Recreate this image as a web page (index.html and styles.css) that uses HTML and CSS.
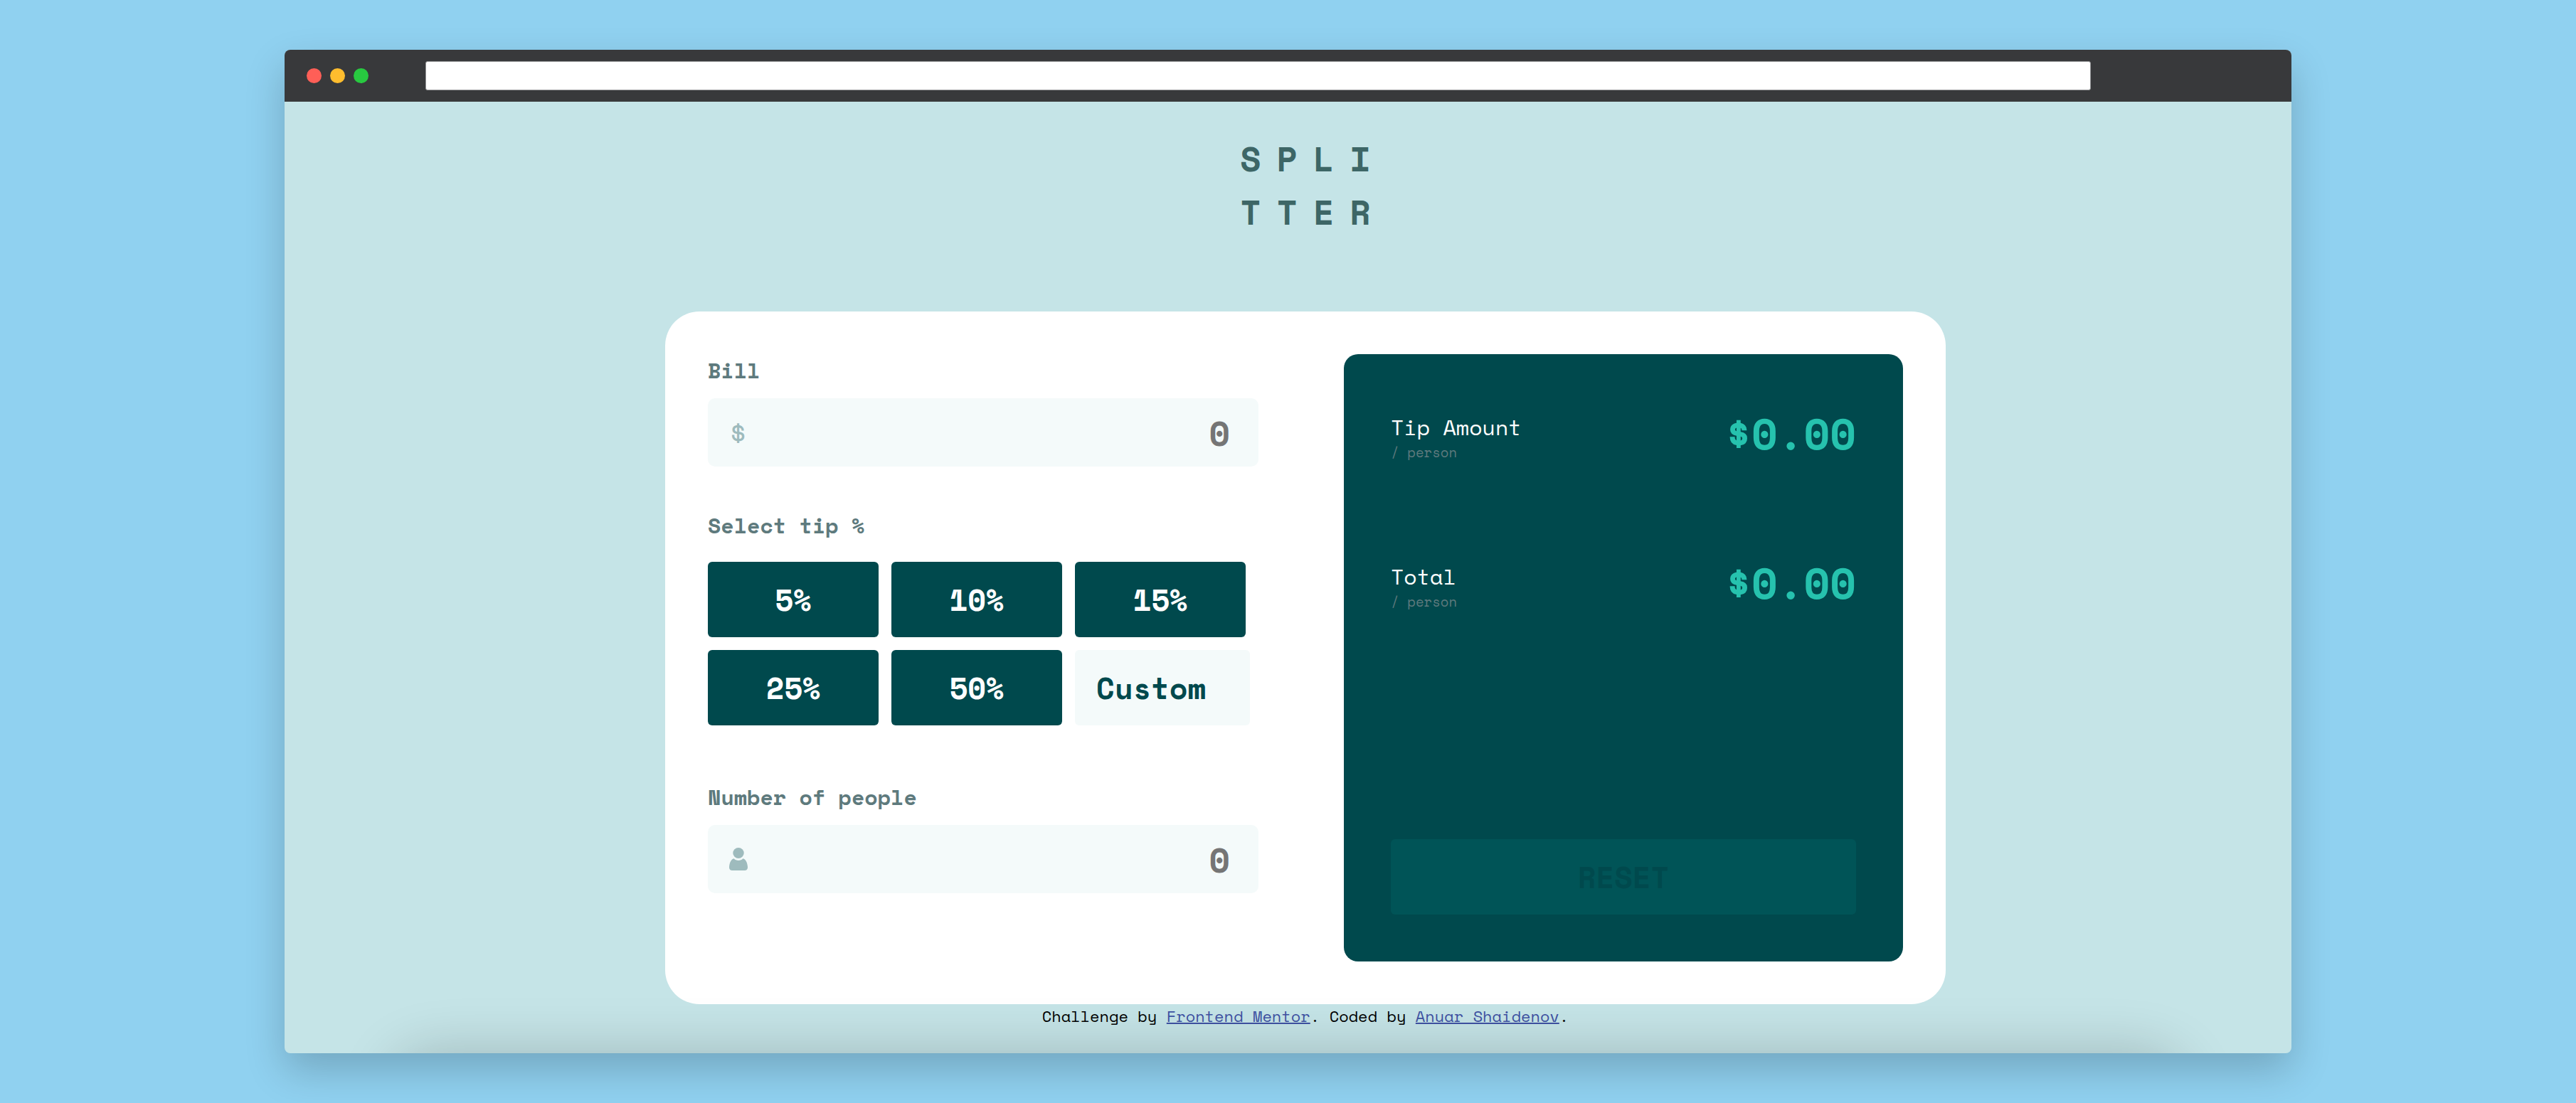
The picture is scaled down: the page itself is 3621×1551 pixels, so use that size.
FILE: index.html
```html
<!DOCTYPE html>
<html lang="en">
<head>
  <meta charset="utf-8">
  <meta name="viewport" content="width=device-width, initial-scale=1">
  <title>Splitter</title>
  <link rel="stylesheet" href="styles.css">
</head>
<body>
  <div class="window">
    <header class="window-bar">
      <div class="dots">
        <span class="dot dot-red"></span>
        <span class="dot dot-yellow"></span>
        <span class="dot dot-green"></span>
      </div>
      <input class="address" type="text" aria-label="Address">
    </header>

    <div class="page">
      <h1 class="logo">SPLI<br>TTER</h1>

      <main class="card">
        <form class="form">
          <label class="label" for="bill">Bill</label>
          <div class="field">
            <span class="field-icon" aria-hidden="true">$</span>
            <input class="field-input" id="bill" type="text" inputmode="decimal" placeholder="0">
          </div>

          <fieldset class="tips">
            <legend class="label">Select tip %</legend>
            <div class="tip-grid">
              <button class="tip" type="button">5%</button>
              <button class="tip" type="button">10%</button>
              <button class="tip" type="button">15%</button>
              <button class="tip" type="button">25%</button>
              <button class="tip" type="button">50%</button>
              <input class="custom" type="text" inputmode="numeric" placeholder="Custom" aria-label="Custom tip">
            </div>
          </fieldset>

          <label class="label" for="people">Number of people</label>
          <div class="field">
            <svg class="field-icon" width="26" height="32" viewBox="0 0 26 32" aria-hidden="true">
              <ellipse cx="13" cy="7.5" rx="7.7" ry="7.5" fill="currentColor"/>
              <path fill="currentColor" d="M6.600 15.200C8.200 17 10.400 18 13 18s4.800-1 6.400-2.800c3.800.9 6.100 5.600 6.600 11.800.2 3.200-1.500 5-4.200 5H4.200C1.500 32-.2 30.200 0 27c.5-6.200 2.800-10.900 6.600-11.800z"/>
            </svg>
            <input class="field-input" id="people" type="text" inputmode="numeric" placeholder="0">
          </div>
        </form>

        <section class="result">
          <div class="row">
            <div class="row-label">
              <p class="row-title">Tip Amount</p>
              <p class="row-note">/ person</p>
            </div>
            <output class="amount">$0.00</output>
          </div>
          <div class="row">
            <div class="row-label">
              <p class="row-title">Total</p>
              <p class="row-note">/ person</p>
            </div>
            <output class="amount">$0.00</output>
          </div>
          <button class="reset" type="reset">RESET</button>
        </section>
      </main>

      <footer class="credits">Challenge by <a href="https://www.frontendmentor.io">Frontend Mentor</a>. Coded by <a href="#">Anuar Shaidenov</a>.</footer>
    </div>
  </div>
</body>
</html>
```
FILE: styles.css
```css
* {
  box-sizing: border-box;
}

body {
  margin: 0;
  padding: 70px 400px;
  background: #90d1f0;
  font-family: "Space Mono", "DejaVu Sans Mono", monospace;
}

p,
h1,
fieldset,
legend {
  margin: 0;
  padding: 0;
  border: 0;
}

button,
input {
  font: inherit;
  border: 0;
  outline: 0;
}

/* Browser window */
.window {
  position: relative;
  overflow: hidden;
  border-radius: 8px;
  background: #c5e4e7;
  box-shadow: 0 24px 56px rgba(0, 0, 0, 0.2);
}

.window::after {
  content: "";
  position: absolute;
  top: 100%;
  left: 150px;
  right: 150px;
  height: 120px;
  border-radius: 60px;
  box-shadow: 0 0 80px rgba(0, 0, 0, 0.2);
  pointer-events: none;
}

.window-bar {
  display: flex;
  align-items: center;
  height: 73px;
  padding-left: 31px;
  background: #38393b;
}

.dots {
  display: flex;
  gap: 12px;
  width: 167px;
}

.dot {
  width: 21px;
  height: 21px;
  border-radius: 50%;
}

.dot-red {
  background: #ff5f57;
}

.dot-yellow {
  background: #ffbd2e;
}

.dot-green {
  background: #28c940;
}

.address {
  flex: 1;
  height: 41px;
  margin-right: 282px;
  padding: 0 12px;
  border: 1px solid #97989a;
  border-radius: 3px;
  background: #fff;
}

/* Page */
.page {
  display: flex;
  flex-direction: column;
  align-items: center;
  padding: 42px 0 36px 49px;
}

.logo {
  margin-bottom: 103px;
  padding-left: 22px;
  color: #3d6666;
  font-size: 48px;
  line-height: 75px;
  letter-spacing: 22px;
}

.card {
  display: grid;
  grid-template-columns: minmax(0, 774fr) minmax(0, 786fr);
  gap: 120px;
  width: 100%;
  max-width: 1800px;
  padding: 60px;
  border-radius: 48px;
  background: #fff;
}

.label {
  display: block;
  margin-bottom: 16px;
  color: #5e7a7d;
  font-size: 30px;
  font-weight: 700;
  line-height: 46px;
}

.field {
  display: flex;
  align-items: center;
  height: 96px;
  padding: 0 40px 0 30px;
  border-radius: 10px;
  background: #f4fafa;
}

.field-icon {
  flex: none;
  color: #9ebbbd;
  font-size: 42px;
  line-height: 48px;
}

.field-input {
  flex: 1;
  min-width: 0;
  height: 96px;
  padding: 0;
  background: none;
  color: #00494d;
  font-size: 48px;
  font-weight: 700;
  text-align: right;
}

.field-input::placeholder {
  color: #757575;
}

.tips {
  margin: 60px 0 78px;
}

.tip-grid {
  display: grid;
  grid-template-columns: 240px 240px 246px;
  grid-auto-rows: 106px;
  gap: 18px;
  padding-top: 12px;
}

.tip,
.custom,
.reset {
  padding: 0;
  border-radius: 6px;
  font-size: 42px;
  font-weight: 700;
}

.tip {
  width: 240px;
  background: #00494d;
  color: #fff;
}

.custom {
  width: 100%;
  padding-left: 30px;
  background: #f4fafa;
  color: #00494d;
}

.custom::placeholder {
  color: #00494d;
}

/* Result panel */
.result {
  display: flex;
  flex-direction: column;
  gap: 118px;
  min-height: 854px;
  padding: 66px;
  border-radius: 20px;
  background: #00494d;
}

.row {
  display: flex;
  justify-content: space-between;
}

.row-label {
  padding-top: 14px;
}

.row-title {
  color: #fff;
  font-size: 30px;
  line-height: 46px;
}

.row-note {
  color: #5e7a7d;
  font-size: 19px;
  line-height: 24px;
}

.amount {
  color: #26c2ae;
  font-size: 60px;
  font-weight: 700;
  line-height: 92px;
}

.reset {
  height: 106px;
  margin-top: auto;
  background: #005457;
  color: #00494d;
}

.credits {
  font-size: 22px;
  line-height: 33px;
  text-align: center;
}

.credits a {
  color: #3e52a3;
  text-decoration-thickness: 2px;
}
```
